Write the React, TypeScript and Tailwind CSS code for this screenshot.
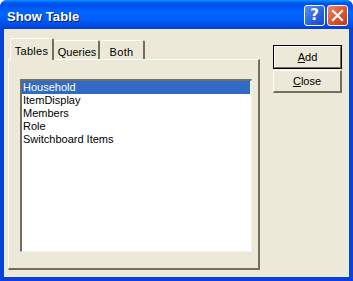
import React from "react";

const items = ["Household", "ItemDisplay", "Members", "Role", "Switchboard Items"];

export default function App() {
  const font = { fontFamily: '"Liberation Sans", Arial, sans-serif' };
  return (
    <div className="w-[353px] h-[281px] bg-white" style={font}>
      <div className="w-[353px] h-[281px] flex flex-col rounded-t-[7px] overflow-hidden bg-[#0842D8]">
        {/* Title bar */}
        <div className="h-[29px] flex items-center bg-[linear-gradient(to_bottom,#0997FF_0px,#0053EE_3px,#0050EE_6px,#0066FF_12px,#005CF6_20px,#004BE0_26px,#003DD7_29px)] pl-[7px] pr-[5px]">
          <span className="text-white font-bold text-[13px] tracking-[0.1px] [text-shadow:1px_1px_0_#0A1883] mt-[4px]">
            Show Table
          </span>
          <div className="ml-auto flex gap-[2px] mt-[2px]">
            <div className="w-[21px] h-[21px] rounded-[3px] border border-white bg-[linear-gradient(135deg,#5B8CF5,#2A5FE0_60%,#1B48C8)] flex items-center justify-center">
              <span className="text-white font-bold text-[15px] leading-none" style={{ fontFamily: '"DejaVu Sans", sans-serif' }}>?</span>
            </div>
            <div className="w-[21px] h-[21px] rounded-[3px] border border-white bg-[linear-gradient(135deg,#E9876A,#E0522A_55%,#C53A14)] flex items-center justify-center">
              <svg width="13" height="13" viewBox="0 0 13 13">
                <path d="M2 2 L11 11 M11 2 L2 11" stroke="white" strokeWidth="2.2" strokeLinecap="square" />
              </svg>
            </div>
          </div>
        </div>
        {/* Body */}
        <div className="flex-1 px-[4px] pb-[4px] flex">
          <div className="flex-1 bg-[#ECE9D8] flex pl-[4px] pt-[9px] text-[11px] text-black">
            {/* Left column: tabs + panel */}
            <div className="w-[252px] flex flex-col">
              <div className="h-[21px] flex items-end pl-[2px] relative z-10">
                <div className="w-[44px] h-[22px] -mb-[1px] bg-[#ECE9D8] border-t border-l border-white border-r-2 border-r-[#716F64] rounded-t-[2px] flex items-start justify-center pt-[4px] tracking-[0.3px]">
                  Tables
                </div>
                <div className="w-[46px] h-[19px] bg-[#ECE9D8] border-t border-white border-r-2 border-r-[#716F64] rounded-t-[2px] flex items-start justify-center pt-[3px] pl-[2px]">
                  Queries
                </div>
                <div className="w-[45px] h-[19px] bg-[#ECE9D8] border-t border-white border-r-2 border-r-[#716F64] rounded-t-[2px] flex items-start justify-center pt-[3px] tracking-[0.3px]">
                  Both
                </div>
              </div>
              <div className="h-[211px] border-t border-l border-white border-r-2 border-b-2 border-r-[#716F64] border-b-[#716F64] pl-[11px] pt-[19px]">
                <div className="w-[232px] h-[173px] border-t-2 border-l-2 border-t-[#716F64] border-l-[#716F64] border-b border-r border-b-[#F1EFE2] border-r-[#F1EFE2] bg-white">
                  <div className="flex flex-col">
                    {items.map((t, i) => (
                      <div
                        key={t}
                        className={
                          i === 0
                            ? "h-[13px] leading-[13px] pl-[1px] bg-[#316AC5] text-white mr-[1px]"
                            : "h-[13px] leading-[13px] pl-[1px]"
                        }
                      >
                        {t}
                      </div>
                    ))}
                  </div>
                </div>
              </div>
            </div>
            {/* Right column: buttons */}
            <div className="pl-[13px] pt-[7px] flex flex-col gap-[1px]">
              <div className="w-[69px] h-[24px] border border-black">
                <div className="w-full h-full border-t border-l border-white border-r border-b border-r-[#716F64] border-b-[#716F64] flex items-center justify-center">
                  <span><u>A</u>dd</span>
                </div>
              </div>
              <div className="w-[69px] h-[23px] border-t border-l border-white border-r-2 border-b-2 border-r-[#716F64] border-b-[#716F64] flex items-center justify-center">
                <span><u>C</u>lose</span>
              </div>
            </div>
          </div>
        </div>
      </div>
    </div>
  );
}
